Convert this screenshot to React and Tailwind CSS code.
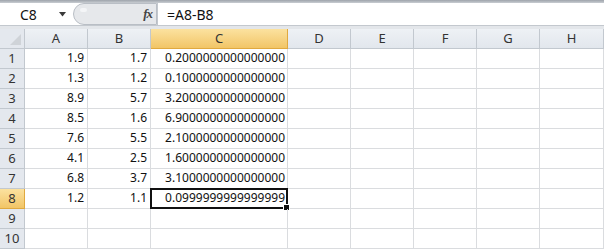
import React from "react";

const cols = ["A", "B", "C", "D", "E", "F", "G", "H"];

const data = [
  ["1.9", "1.7", "0.2000000000000000"],
  ["1.3", "1.2", "0.1000000000000000"],
  ["8.9", "5.7", "3.2000000000000000"],
  ["8.5", "1.6", "6.9000000000000000"],
  ["7.6", "5.5", "2.1000000000000000"],
  ["4.1", "2.5", "1.6000000000000000"],
  ["6.8", "3.7", "3.1000000000000000"],
  ["1.2", "1.1", "0.0999999999999999"],
  ["", "", ""],
  ["", "", ""],
];

const FormulaBar = () => (
  <div className="flex h-[23px] bg-white border-b border-[#c3c8ce]">
    {/* name box */}
    <div className="w-[73px] flex items-center justify-between pl-[20px] pr-[7px] text-[14px] text-[#111]">
      <span>C8</span>
      <svg width="7" height="5" viewBox="0 0 7 5">
        <path d="M0 0 L7 0 L3.5 4.5 Z" fill="#3a3a3a" />
      </svg>
    </div>
    {/* fx area */}
    <div className="w-[84px] relative flex items-center justify-end pr-[4px] bg-[#e6e8eb] border border-[#b9bec5] rounded-l-full">
      <div className="absolute left-[6px] top-[4px] w-[7px] h-[4px] rounded-full bg-[#f4f5f7]" />
      <span className="italic font-bold text-[13px] text-[#444] font-['Liberation_Serif',serif] tracking-[-1px]">
        fx
      </span>
    </div>
    <div className="flex-1 flex items-center pl-[9px] text-[14px] text-[#111] border-l border-[#c3c8ce]">
      =A8-B8
    </div>
  </div>
);

export default function App() {
  return (
    <div className="w-[604px] h-[250px] overflow-hidden bg-white font-['Noto_Sans','Open_Sans',sans-serif]">
      <div className="h-[3px] bg-gradient-to-b from-[#9ea4ab] to-[#c9cdd2]" />
      <FormulaBar />
      <div className="h-[3px] bg-[#e3e6ea]" />
      <div className="grid grid-cols-[25px_63px_63px_137px_63px_63px_63px_63px_64px] text-[12px]">
        {/* header row */}
        <div className="h-[20px] bg-[#e4e8ee] border-r border-b border-[#c2c8cf] relative">
          <svg className="absolute right-[3px] bottom-[3px]" width="11" height="11" viewBox="0 0 11 11">
            <path d="M11 0 L11 11 L0 11 Z" fill="#cfd3d8" />
          </svg>
        </div>
        {cols.map((c) => (
          <div
            key={c}
            className={
              c === "C"
                ? "h-[20px] flex items-center justify-center text-[13px] text-[#333] bg-gradient-to-b from-[#fbe29f] to-[#f2c566] border-r border-b border-[#e0a93f]"
                : "h-[20px] flex items-center justify-center text-[13px] text-[#333] bg-gradient-to-b from-[#eef1f5] to-[#e2e7ed] border-r border-b border-[#c2c8cf]"
            }
          >
            {c}
          </div>
        ))}
        {data.map((row, i) => (
          <React.Fragment key={i}>
            <div
              className={
                i === 7
                  ? "h-[20px] flex items-center justify-center text-[13px] text-[#333] bg-gradient-to-b from-[#fbe29f] to-[#f2c566] border-r border-b border-[#e0a93f]"
                  : "h-[20px] flex items-center justify-center text-[13px] text-[#333] bg-[#e4e8ee] border-r border-b border-[#c2c8cf]"
              }
            >
              {i + 1}
            </div>
            <div className="h-[20px] flex items-end justify-end pr-[3px] pb-[1px] text-[#111] border-r border-b border-[#dadcdf]">
              {row[0]}
            </div>
            <div className="h-[20px] flex items-end justify-end pr-[3px] pb-[1px] text-[#111] border-r border-b border-[#dadcdf]">
              {row[1]}
            </div>
            <div className="h-[20px] relative flex items-end justify-end pr-[2px] pb-[1px] text-[#111] border-r border-b border-[#dadcdf]">
              {row[2]}
              {i === 7 && (
                <>
                  <div className="absolute left-[-1px] top-[-1px] right-[-1px] bottom-[-1px] border-2 border-[#111]" />
                  <div className="absolute right-[-3px] bottom-[-3px] w-[5px] h-[5px] bg-[#111] border border-white box-content" />
                </>
              )}
            </div>
            {[0, 1, 2, 3, 4].map((k) => (
              <div key={k} className="h-[20px] border-r border-b border-[#dadcdf]" />
            ))}
          </React.Fragment>
        ))}
      </div>
    </div>
  );
}
